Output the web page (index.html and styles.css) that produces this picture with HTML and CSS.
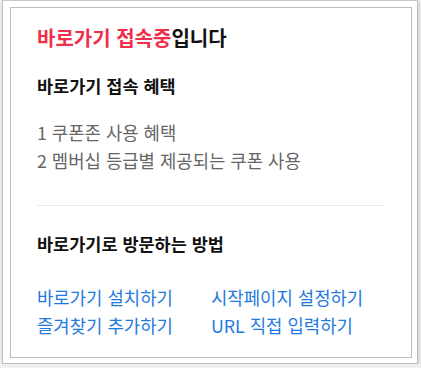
FILE: index.html
```html
<!DOCTYPE html>
<html lang="ko">
<head>
  <meta charset="UTF-8" />
  <meta name="viewport" content="width=device-width, initial-scale=1.0" />
  <title>바로가기 접속중</title>
  <link rel="stylesheet" href="styles.css">
</head>
<body>
  <div class="popup">
    <div class="panel">
      <h1 class="title"><span class="accent">바로가기 접속중</span>입니다</h1>

      <h2 class="section-title">바로가기 접속 혜택</h2>
      <ul class="benefits">
        <li>1 쿠폰존 사용 혜택</li>
        <li>2 멤버십 등급별 제공되는 쿠폰 사용</li>
      </ul>

      <hr class="divider" />

      <h2 class="section-title">바로가기로 방문하는 방법</h2>
      <div class="links">
        <a href="#">바로가기 설치하기</a>
        <a href="#">시작페이지 설정하기</a>
        <a href="#">즐겨찾기 추가하기</a>
        <a href="#">URL 직접 입력하기</a>
      </div>
    </div>
  </div>
</body>
</html>
```

FILE: styles.css
```css
body {
  font-family: "Noto Sans CJK KR", "Noto Sans", sans-serif;
  margin: 0;
  background: #f0f0f0;
}
.popup {
  width: 416px;
  margin-left: 2px;
  padding: 6px 5px 5px 7px;
  background: #fff;
  border: 1px solid #bdbdbd;
  border-top-color: #c8c8c8;
  box-shadow: 1px 2px 4px rgba(0, 0, 0, 0.15);
  box-sizing: border-box;
}
.panel {
  border: 1px solid #bdbdbd;
  padding: 16px 26px 14px 26px;
  height: 351px;
  box-sizing: border-box;
}
.title {
  margin: 0;
  font-size: 20px;
  font-weight: bold;
  line-height: 28px;
  color: #111;
}
.accent {
  color: #f0304a;
}
.section-title {
  margin: 22px 0 0 0;
  font-size: 17.5px;
  font-weight: bold;
  line-height: 24px;
  color: #111;
}
.benefits {
  list-style: none;
  margin: 20px 0 0 0;
  padding: 0;
  color: #666;
  font-size: 17.8px;
  line-height: 28px;
}
.divider {
  border: none;
  border-top: 1px solid #eaeaea;
  margin: 31px 0 0 0;
}
.links {
  display: grid;
  grid-template-columns: 174px auto;
  margin-top: 27px;
  font-size: 17.8px;
  line-height: 28px;
}
.links a {
  color: #1f7ae0;
  text-decoration: none;
}
.divider + .section-title {
  margin-top: 26px;
}
```
